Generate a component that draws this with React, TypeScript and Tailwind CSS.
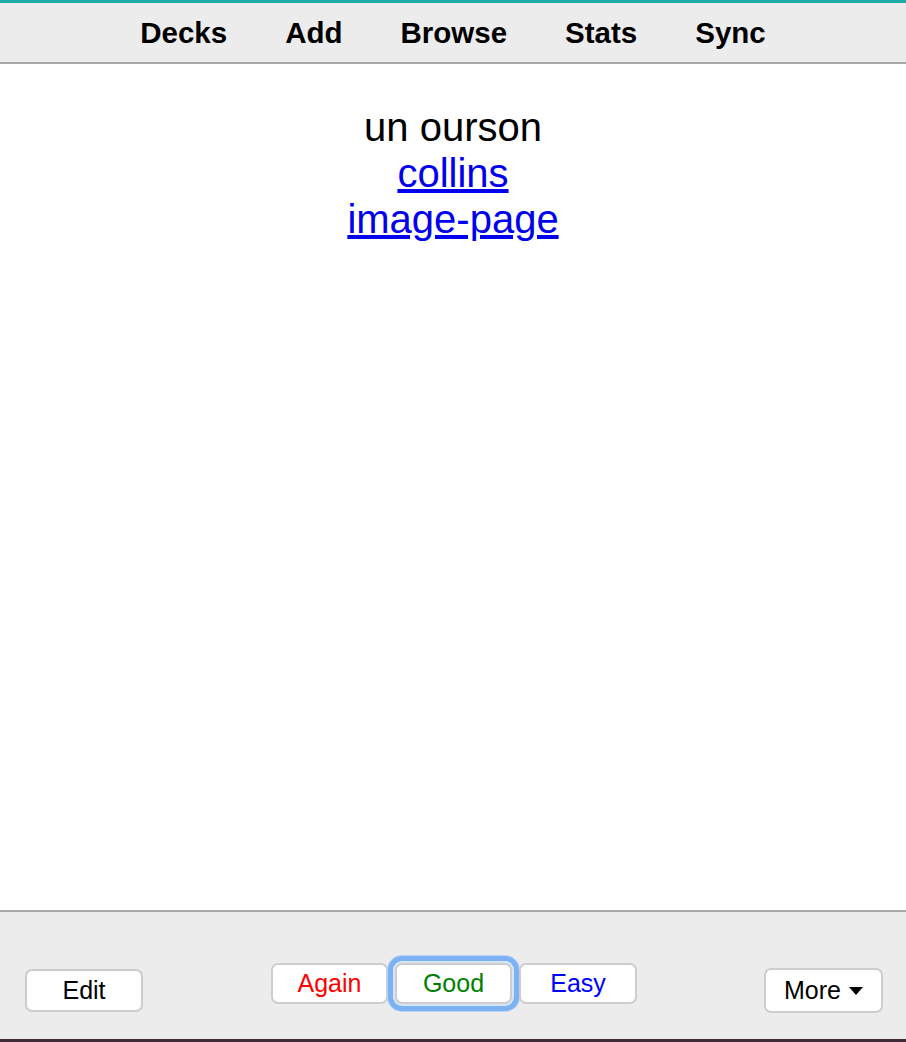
import React from "react";

const font = { fontFamily: '"Liberation Sans", Arial, Helvetica, sans-serif' };

function Btn({ children, className = "" }: { children: React.ReactNode; className?: string }) {
  return (
    <button
      className={`rounded-[7px] border-2 border-[#cdcdcd] bg-white text-[25px] leading-none ${className}`}
      style={font}
    >
      {children}
    </button>
  );
}

export default function App() {
  return (
    <div className="flex h-[1042px] w-[906px] flex-col bg-white" style={font}>
      <div className="h-[3px] bg-[#1eaca7]" />
      <nav className="flex h-[61px] items-center justify-center gap-[58px] border-b-2 border-[#a9a9a9] bg-[#ececec] pt-[2px] text-[29.5px] font-bold text-black">
        <span>Decks</span>
        <span>Add</span>
        <span>Browse</span>
        <span>Stats</span>
        <span>Sync</span>
      </nav>
      <main className="flex-1 pt-[40px] text-center text-[40px] leading-[46px] text-black">
        <div>un ourson</div>
        <div>
          <a className="text-[#0000ee] underline" href="#">collins</a>
        </div>
        <div>
          <a className="text-[#0000ee] underline" href="#">image-page</a>
        </div>
      </main>
      <footer className="grid h-[129px] grid-cols-[1fr_auto_1fr] items-start border-t-2 border-[#a9a9a9] bg-[#ececec] pl-[25px] pr-[23px]">
        <div className="pt-[57px]">
          <Btn className="h-[43px] w-[118px] text-black">Edit</Btn>
        </div>
        <div className="flex gap-[7px] pt-[51px]">
          <Btn className="h-[41px] w-[117px] text-[#ff0000]">Again</Btn>
          <Btn className="h-[41px] w-[117px] text-[#008000] shadow-[0_0_0_2px_#d6e7fb,0_0_0_7px_#7cb2f1,0_0_0_8px_#b7d4f7]">Good</Btn>
          <Btn className="h-[41px] w-[118px] text-[#0000ff]">Easy</Btn>
        </div>
        <div className="flex justify-end pt-[56px]">
          <Btn className="flex h-[45px] w-[119px] items-center justify-center gap-[8px] text-black">
            <span>More</span>
            <svg width="14" height="8" viewBox="0 0 14 8"><path d="M0 0H14L7 8Z" fill="#000" /></svg>
          </Btn>
        </div>
      </footer>
      <div className="h-[3px] bg-[#3f2a38]" />
    </div>
  );
}
